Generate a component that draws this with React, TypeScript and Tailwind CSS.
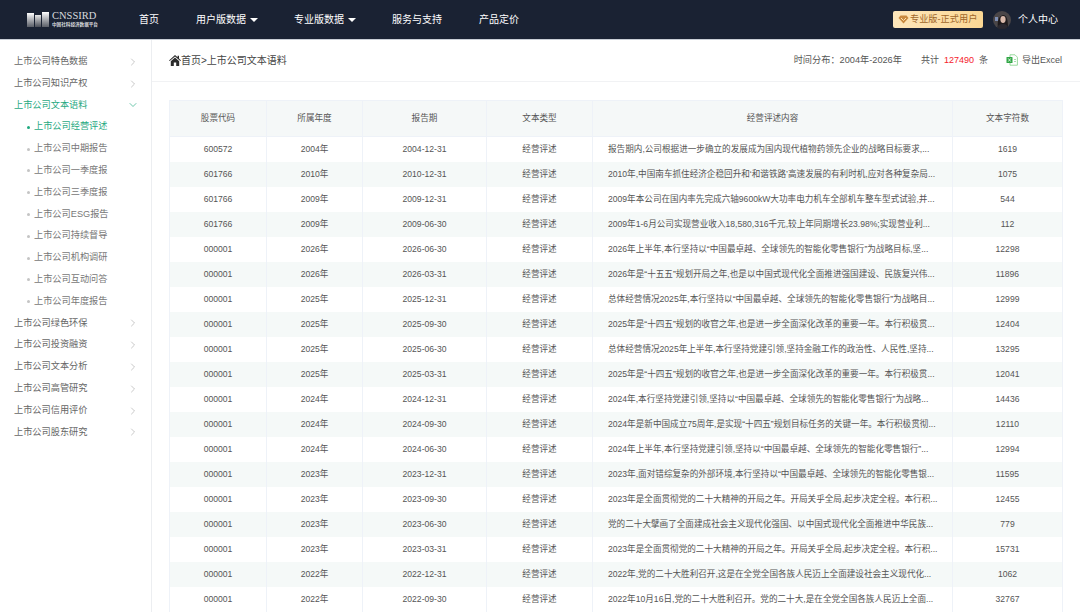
import { ChevronDown, ChevronRight } from "lucide-react";

type Row = {
  code: string;
  year: string;
  date: string;
  text: string;
  count: string;
};

const rows: Row[] = [
  { code: "600572", year: "2004年", date: "2004-12-31", text: "报告期内,公司根据进一步确立的发展成为国内现代植物药领先企业的战略目标要求,...", count: "1619" },
  { code: "601766", year: "2010年", date: "2010-12-31", text: "2010年,中国南车抓住经济企稳回升和‘和谐铁路’高速发展的有利时机,应对各种复杂局...", count: "1075" },
  { code: "601766", year: "2009年", date: "2009-12-31", text: "2009年本公司在国内率先完成六轴9600kW大功率电力机车全部机车整车型式试验,并...", count: "544" },
  { code: "601766", year: "2009年", date: "2009-06-30", text: "2009年1-6月公司实现营业收入18,580,316千元,较上年同期增长23.98%;实现营业利...", count: "112" },
  { code: "000001", year: "2026年", date: "2026-06-30", text: "2026年上半年,本行坚持以“中国最卓越、全球领先的智能化零售银行”为战略目标,坚...", count: "12298" },
  { code: "000001", year: "2026年", date: "2026-03-31", text: "2026年是“十五五”规划开局之年,也是以中国式现代化全面推进强国建设、民族复兴伟...", count: "11896" },
  { code: "000001", year: "2025年", date: "2025-12-31", text: "总体经营情况2025年,本行坚持以“中国最卓越、全球领先的智能化零售银行”为战略目...", count: "12999" },
  { code: "000001", year: "2025年", date: "2025-09-30", text: "2025年是“十四五”规划的收官之年,也是进一步全面深化改革的重要一年。本行积极贯...", count: "12404" },
  { code: "000001", year: "2025年", date: "2025-06-30", text: "总体经营情况2025年上半年,本行坚持党建引领,坚持金融工作的政治性、人民性,坚持...", count: "13295" },
  { code: "000001", year: "2025年", date: "2025-03-31", text: "2025年是“十四五”规划的收官之年,也是进一步全面深化改革的重要一年。本行积极贯...", count: "12041" },
  { code: "000001", year: "2024年", date: "2024-12-31", text: "2024年,本行坚持党建引领,坚持以“中国最卓越、全球领先的智能化零售银行”为战略...", count: "14436" },
  { code: "000001", year: "2024年", date: "2024-09-30", text: "2024年是新中国成立75周年,是实现“十四五”规划目标任务的关键一年。本行积极贯彻...", count: "12110" },
  { code: "000001", year: "2024年", date: "2024-06-30", text: "2024年上半年,本行坚持党建引领,坚持以“中国最卓越、全球领先的智能化零售银行”...", count: "12994" },
  { code: "000001", year: "2023年", date: "2023-12-31", text: "2023年,面对错综复杂的外部环境,本行坚持以“中国最卓越、全球领先的智能化零售银...", count: "11595" },
  { code: "000001", year: "2023年", date: "2023-09-30", text: "2023年是全面贯彻党的二十大精神的开局之年。开局关乎全局,起步决定全程。本行积...", count: "12455" },
  { code: "000001", year: "2023年", date: "2023-06-30", text: "党的二十大擘画了全面建成社会主义现代化强国、以中国式现代化全面推进中华民族...", count: "779" },
  { code: "000001", year: "2023年", date: "2023-03-31", text: "2023年是全面贯彻党的二十大精神的开局之年。开局关乎全局,起步决定全程。本行积...", count: "15731" },
  { code: "000001", year: "2022年", date: "2022-12-31", text: "2022年,党的二十大胜利召开,这是在全党全国各族人民迈上全面建设社会主义现代化...", count: "1062" },
  { code: "000001", year: "2022年", date: "2022-09-30", text: "2022年10月16日,党的二十大胜利召开。党的二十大,是在全党全国各族人民迈上全面...", count: "32767" },
];

const menuTop = ["上市公司特色数据", "上市公司知识产权"];
const subMenu = ["上市公司经营评述", "上市公司中期报告", "上市公司一季度报", "上市公司三季度报", "上市公司ESG报告", "上市公司持续督导", "上市公司机构调研", "上市公司互动问答", "上市公司年度报告"];
const menuBottom = ["上市公司绿色环保", "上市公司投资融资", "上市公司文本分析", "上市公司高管研究", "上市公司信用评价", "上市公司股东研究"];

function Caret() {
  return <span className="ml-1 h-0 w-0 border-x-[4px] border-t-[4px] border-x-transparent border-t-white" />;
}

function Logo() {
  return (
    <div className="flex items-center gap-[3px]">
      <div className="flex items-end gap-[1px]">
        <div className="h-[14px] w-[7px] bg-gradient-to-b from-white to-[#5b5f68]" />
        <div className="h-[12px] w-[6px] bg-gradient-to-b from-[#e8e8e8] to-[#4b4f58]" />
        <div className="h-[15px] w-[7px] bg-gradient-to-b from-white to-[#5b5f68]" />
      </div>
      <div className="flex flex-col">
        <span className="font-['Liberation_Serif',serif] text-[10.5px] leading-[10px] text-[#d8dade]">CNSSIRD</span>
        <span className="mt-[1px] whitespace-nowrap text-[4.6px] leading-[6px] font-bold text-[#d8dade]">中国社科经济数据平台</span>
      </div>
    </div>
  );
}

function Diamond() {
  return (
    <svg width="11" height="9" viewBox="0 0 11 9" className="shrink-0">
      <path d="M2.5 0.5h6l2 2.5-5 5.5-5-5.5z" fill="#c9893f" />
      <path d="M3 3l2.5 2.5L8 3" fill="none" stroke="#fde3ae" strokeWidth="1" />
    </svg>
  );
}

function Avatar() {
  return (
    <svg width="18" height="18" viewBox="0 0 18 18" className="shrink-0 rounded-full">
      <rect width="18" height="18" fill="#4a4648" />
      <path d="M5 18c-1-6 0-13 5-14 4 0 5 5 5 14z" fill="#1e1a1c" />
      <ellipse cx="10" cy="8.5" rx="2.6" ry="3.4" fill="#d9b9aa" />
      <path d="M4 18c0-4 3-5 6-5s5 1 5 5z" fill="#2a2830" />
      <rect x="2" y="6" width="3" height="4" fill="#7e8fb5" />
    </svg>
  );
}

function HomeIcon() {
  return (
    <svg width="12" height="11" viewBox="0 0 12 11" className="shrink-0">
      <path d="M6 0L0 5.4l.7.7L6 1.5l5.3 4.6.7-.7-2-1.8V.8H8.6v1.4z" fill="#2b2b2b" />
      <path d="M6 2.6L1.8 6.2V11h3V7.6h2.4V11h3V6.2z" fill="#2b2b2b" />
    </svg>
  );
}

function ExcelIcon() {
  return (
    <svg width="12" height="12" viewBox="0 0 12 12" className="shrink-0">
      <path d="M4 .8h5l2.4 2.4v8H4z" fill="none" stroke="#8fd694" strokeWidth="0.9" />
      <rect x="0.5" y="3" width="6" height="6" rx="0.6" fill="#2fa644" />
      <path d="M2.2 4.4l2.6 3.2M4.8 4.4L2.2 7.6" stroke="#fff" strokeWidth="0.8" />
      <path d="M8 5.5h2M8 7.5h2" stroke="#8fd694" strokeWidth="0.8" />
    </svg>
  );
}

function SideItem({ label }: { label: string }) {
  return (
    <div className="flex h-[21.8px] items-center justify-between pr-[12px] pl-[14px] text-[9.2px] text-[#666]">
      <span>{label}</span>
      <ChevronRight size={12} strokeWidth={1.3} className="text-[#aaa]" />
    </div>
  );
}

export default function App() {
  return (
    <div className="flex h-[612px] w-[1080px] flex-col overflow-hidden bg-white font-['Liberation_Sans','Noto_Sans_CJK_SC',sans-serif]">
      <header className="flex h-[40px] shrink-0 items-center border-b border-[#c9ced6] bg-[#1a2233] text-[10px] text-white">
        <div className="ml-[27px] w-[112px]">
          <Logo />
        </div>
        <nav className="flex items-center">
          <span className="w-[57px]">首页</span>
          <span className="flex w-[98px] items-center">用户版数据<Caret /></span>
          <span className="flex w-[98px] items-center">专业版数据<Caret /></span>
          <span className="w-[87px]">服务与支持</span>
          <span>产品定价</span>
        </nav>
        <div className="ml-auto flex items-center">
          <div className="flex h-[17px] w-[90px] items-center gap-[1px] rounded-[2px] bg-gradient-to-r from-[#fde6bb] to-[#fbd793] pl-[5px] text-[9.2px] text-[#a0672a]">
            <Diamond />
            <span className="whitespace-nowrap">专业版-正式用户</span>
          </div>
          <div className="ml-[10px]">
            <Avatar />
          </div>
          <span className="mr-[22px] ml-[7px]">个人中心</span>
        </div>
      </header>

      <div className="flex min-h-0 flex-1">
        <aside className="w-[152px] shrink-0 border-r border-[#eceef1] pt-[11px]">
          {menuTop.map((m) => (
            <SideItem key={m} label={m} />
          ))}
          <div className="flex h-[21.8px] items-center justify-between pr-[12px] pl-[14px] text-[9.2px] text-[#1fa97f]">
            <span>上市公司文本语料</span>
            <ChevronDown size={12} strokeWidth={1.3} />
          </div>
          {subMenu.map((m, i) => (
            <div
              key={m}
              className={
                i === 0
                  ? "flex h-[21.8px] items-center pl-[27px] text-[9.2px] text-[#1fa97f]"
                  : "flex h-[21.8px] items-center pl-[27px] text-[9.2px] text-[#777]"
              }
            >
              <span className={i === 0 ? "mr-[4px] h-[3px] w-[3px] rounded-full bg-[#1fa97f]" : "mr-[4px] h-[3px] w-[3px] rounded-full bg-[#c4c4c4]"} />
              {m}
            </div>
          ))}
          {menuBottom.map((m) => (
            <SideItem key={m} label={m} />
          ))}
        </aside>

        <main className="min-w-0 flex-1">
          <div className="flex h-[42px] items-center border-b border-[#f1f2f4] pr-[18px] pl-[17px]">
            <HomeIcon />
            <span className="text-[10px] text-[#444]">首页&gt;上市公司文本语料</span>
            <div className="ml-auto flex items-center text-[9px] text-[#555]">
              <span className="text-[9.2px]">时间分布：2004年-2026年</span>
              <span className="ml-[19px]">共计</span>
              <span className="mx-[5px] text-[#f5222d]">127490</span>
              <span>条</span>
              <span className="mr-[4px] ml-[18px]"><ExcelIcon /></span>
              <span>导出Excel</span>
            </div>
          </div>

          <div className="pt-[18px] pr-[18px] pl-[17px]">
            <table className="w-[893px] table-fixed border-collapse text-center text-[8.6px] text-[#555]">
              <colgroup>
                <col className="w-[97px]" />
                <col className="w-[96px]" />
                <col className="w-[124px]" />
                <col className="w-[106px]" />
                <col className="w-[360px]" />
                <col className="w-[110px]" />
              </colgroup>
              <thead>
                <tr className="h-[36px] bg-[#f5f8f8]">
                  {["股票代码", "所属年度", "报告期", "文本类型", "经营评述内容", "文本字符数"].map((h) => (
                    <th key={h} className="border border-[#eef2f8] font-normal">
                      {h}
                    </th>
                  ))}
                </tr>
              </thead>
              <tbody>
                {rows.map((r, i) => (
                  <tr key={r.date + r.code} className={i % 2 === 0 ? "h-[25px] bg-white" : "h-[25px] bg-[#f5f9f8]"}>
                    <td className="border-x border-[#eef2f8]">{r.code}</td>
                    <td className="border-x border-[#eef2f8]">{r.year}</td>
                    <td className="border-x border-[#eef2f8]">{r.date}</td>
                    <td className="border-x border-[#eef2f8]">经营评述</td>
                    <td className="border-x border-[#eef2f8] pl-[15px] text-left whitespace-nowrap">{r.text}</td>
                    <td className="border-x border-[#eef2f8]">{r.count}</td>
                  </tr>
                ))}
              </tbody>
            </table>
          </div>
        </main>
      </div>
    </div>
  );
}
